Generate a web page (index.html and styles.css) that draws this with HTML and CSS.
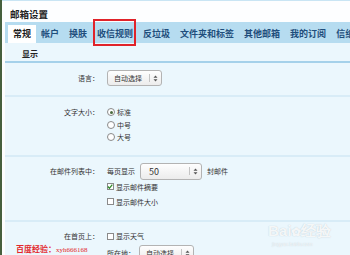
FILE: index.html
```html
<!DOCTYPE html>
<html>
<head>
	<title>邮箱设置</title>
	<meta charset="utf-8">
	<link rel="stylesheet" href="styles.css">
</head>
<body>
	<div class="page">
		<div class="title">邮箱设置</div>
		<div class="panel">
			<ul class="tabs">
				<li class="on">常规</li>
				<li>帐户</li>
				<li>换肤</li>
				<li class="mark">收信规则</li>
				<li>反垃圾</li>
				<li>文件夹和标签</li>
				<li>其他邮箱</li>
				<li>我的订阅</li>
				<li>信纸</li>
			</ul>
			<div class="content">
				<div class="heading">显示</div>

				<div class="row r1">
					<div class="label">语言：</div>
					<div class="ctrls">
						<div class="line">
							<span class="sel w55"><span class="val">自动选择</span><span class="btn"><svg width="5" height="7" viewBox="0 0 5 7"><path d="M2.5 0.5L4.5 2.8H0.5Z M2.5 6.5L4.5 4.2H0.5Z" fill="#555"/></svg></span></span>
						</div>
					</div>
				</div>

				<div class="row r2">
					<div class="label">文字大小：</div>
					<div class="ctrls">
						<div class="line"><span class="radio checked"></span>标准</div>
						<div class="line"><span class="radio"></span>中号</div>
						<div class="line"><span class="radio"></span>大号</div>
					</div>
				</div>

				<div class="row r3">
					<div class="label">在邮件列表中：</div>
					<div class="ctrls">
						<div class="line first">每页显示<span class="sel w62 big"><span class="val">50</span><span class="btn"><svg width="5" height="7" viewBox="0 0 5 7"><path d="M2.5 0.5L4.5 2.8H0.5Z M2.5 6.5L4.5 4.2H0.5Z" fill="#555"/></svg></span></span>封邮件</div>
						<div class="line"><span class="check checked"><svg width="7" height="7" viewBox="0 0 7 7"><path d="M1 3.5L2.8 5.5L6.2 1.2" fill="none" stroke="#2f8a2a" stroke-width="1.4"/></svg></span>显示邮件摘要</div>
						<div class="line"><span class="check"></span>显示邮件大小</div>
					</div>
				</div>

				<div class="row r4">
					<div class="label">在首页上：</div>
					<div class="ctrls">
						<div class="line"><span class="check"></span>显示天气</div>
						<div class="line loc">所在地：<span class="sel w55"><span class="val">自动选择</span><span class="btn"><svg width="5" height="7" viewBox="0 0 5 7"><path d="M2.5 0.5L4.5 2.8H0.5Z M2.5 6.5L4.5 4.2H0.5Z" fill="#555"/></svg></span></span></div>
					</div>
				</div>
			</div>
		</div>

		<div class="mark-red">百度经验：<span>xyh666168</span></div>
		<div class="mark-bd">Bai<span class="paw">&#10047;</span>经验<small>jingyan.baidu.com</small></div>
	</div>
</body>
</html>
```

FILE: styles.css
```css
*{
	margin:0;
	padding:0;
}
body{
	background:#fff;
	font-family:"Noto Sans CJK SC","DejaVu Sans",sans-serif;
	color:#333;
}
.page{
	position:relative;
	width:348px;
	height:255px;
	overflow:hidden;
	border-left:2px solid #46603e;
	background:#fdfeff;
}
	.title{
		height:20px;
		padding:2px 0 0 8px;
		font-size:9.5px;
		font-weight:bold;
		line-height:22px;
		color:#222;
		border-top:1px solid #c9e5f4;
		box-sizing:border-box;
		height:22px;
	}
	.panel{
		margin-left:3px;
	}
	.tabs{
		list-style:none;
		display:flex;
		height:21px;
		padding:3px 0 0 3px;
		box-sizing:border-box;
		background:#b6dcf0;
		white-space:nowrap;
	}
	.tabs li{
		height:18px;
		line-height:18px;
		padding:0 5px;
		font-size:9px;
		font-weight:bold;
		color:#1f4e7c;
	}
	.tabs li.on{
		background:#fff;
		color:#1a1a1a;
	}
	.tabs li.mark{
		position:relative;
	}
	.tabs li.mark:after{
		content:"";
		position:absolute;
		left:1px;
		right:2px;
		top:-6px;
		bottom:-3px;
		border:2px solid #e0232a;
	}
	.content{
		background:#ebf7fd;
		height:212px;
	}
	.heading{
		height:18px;
		padding:0 0 0 17px;
		font-size:8px;
		font-weight:bold;
		line-height:22px;
		color:#222;
		border-bottom:2px solid #a5d1ea;
	}
	.row{
		display:flex;
		border-bottom:2px solid #d8ecf7;
		font-size:7px;
	}
	.label{
		width:94px;
		text-align:right;
		margin-right:8px;
		color:#333;
	}
	.ctrls{
		display:flex;
		flex-direction:column;
	}
	.line{
		display:flex;
		align-items:center;
		white-space:nowrap;
	}

	.r1{ padding:7px 0 9px; }
	.r1 .label{ line-height:16px; }
	.r1 .line{ height:16px; }

	.r2{ padding:9px 0 11.5px; }
	.r2 .label{ line-height:12.5px; }
	.r2 .line{ height:12.5px; }

	.r3{ padding:6px 0 11px; }
	.r3 .label{ line-height:16px; }
	.r3 .line{ height:15px; }
	.r3 .line.first{ height:16px; }

	.r4{ padding:7px 0 0; border-bottom:none; }
	.r4 .label{ line-height:14px; }
	.r4 .line{ height:14px; }
	.r4 .line.loc{ height:16px; margin-top:2px; }

	.sel{
		display:inline-flex;
		align-items:center;
		height:16px;
		box-sizing:border-box;
		border:1px solid #b3b3b3;
		border-radius:3px;
		background:linear-gradient(#fefefe,#ececec);
		color:#333;
	}
	.sel .val{
		flex:1;
		padding-left:6px;
	}
	.sel .btn{
		display:flex;
		align-items:center;
		justify-content:center;
		width:11px;
		height:8px;
		border-left:1px solid #c4c4c4;
	}
	.w55{ width:55px; }
	.w62{ width:62px; margin:0 5px; }
	.sel.big{ height:17px; }
	.sel.big .val{ font-size:9px; padding-left:8px; }
	.loc .sel{ margin-left:4px; }

	.radio{
		display:inline-block;
		width:6px;
		height:6px;
		border:1px solid #8a8a8a;
		border-radius:50%;
		background:#fff;
		margin:0 2px 0 0;
		position:relative;
	}
	.radio.checked:after{
		content:"";
		position:absolute;
		left:1.5px;
		top:1.5px;
		width:3px;
		height:3px;
		border-radius:50%;
		background:#4b6b3e;
	}
	.check{
		display:inline-flex;
		width:7px;
		height:7px;
		box-sizing:border-box;
		border:1px solid #8a8a8a;
		background:#fff;
		margin-right:2px;
		overflow:visible;
	}
	.check svg{
		margin:-1px 0 0 -1px;
	}

.mark-red{
	position:absolute;
	left:14px;
	top:243px;
	font-family:"Liberation Serif","Noto Sans CJK SC",serif;
	font-size:8px;
	font-weight:bold;
	color:#e3262a;
}
	.mark-red span{
		font-size:7px;
		font-weight:normal;
	}
.mark-bd{
	position:absolute;
	left:266px;
	top:222px;
	font-family:"Liberation Sans",sans-serif;
	font-size:15px;
	font-weight:bold;
	color:rgba(255,255,255,0.85);
	text-shadow:0 0 1px rgba(120,140,150,0.45);
	line-height:18px;
}
	.mark-bd .paw{
		font-size:12px;
	}
	.mark-bd small{
		display:block;
		font-size:5px;
		font-weight:normal;
		line-height:6px;
		padding-left:4px;
	}
```
